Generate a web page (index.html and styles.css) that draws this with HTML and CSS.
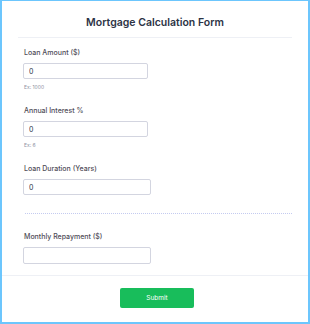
FILE: index.html
```html
<!DOCTYPE html>
<html>
<head>
  <title>Mortgage Calculation Form</title>
  <link rel="stylesheet" href="styles.css">
</head>
<body>
  <div class="frame">
    <div class="header">
      <h1 class="header-title">Mortgage Calculation Form</h1>
    </div>

    <form class="form-body">
      <div class="form-group">
        <label class="form-label" for="loanAmount">Loan Amount ($)</label>
        <input type="text" id="loanAmount" class="form-input" value="0">
        <div class="form-sublabel">Ex: 1000</div>
      </div>
      <div class="form-group">
        <label class="form-label" for="interest">Annual Interest %</label>
        <input type="text" id="interest" class="form-input" value="0">
        <div class="form-sublabel">Ex: 6</div>
      </div>
      <div class="form-group">
        <label class="form-label" for="duration">Loan Duration (Years)</label>
        <input type="text" id="duration" class="form-input wide" value="0">
      </div>

      <div class="divider"></div>

      <div class="form-group result">
        <label class="form-label" for="repayment">Monthly Repayment ($)</label>
        <input type="text" id="repayment" class="form-input wide tall">
      </div>
    </form>

    <div class="footer">
      <button type="button" class="btn-submit">Submit</button>
    </div>
  </div>
</body>
</html>
```

FILE: styles.css
```css
:root {
  --frame: #6cc6fd;
  --text: #2c3345;
  --label: #4f4d57;
  --text-light: #8d8fa0;
  --border: #d3d5e0;
  --line: #eef0f5;
  --green: #18bd5b;
}

html, body {
  margin: 0;
  padding: 0;
  background: #fff;
}

body {
  font-family: Inter, 'Noto Sans', sans-serif;
  color: var(--text);
}

.frame {
  box-sizing: border-box;
  width: 310px;
  height: 324px;
  border: 2px solid var(--frame);
  border-top-width: 1px;
  display: flex;
  flex-direction: column;
}

.header {
  margin: 0 16px;
  padding: 15px 0 7px;
  border-bottom: 1px solid var(--line);
  text-align: center;
}

.header-title {
  margin: 0;
  font-size: 10.5px;
  line-height: 14px;
  font-weight: 600;
}

.form-body {
  padding: 0 21px;
}

.form-group {
  display: flex;
  flex-direction: column;
  align-items: flex-start;
  margin-top: 10px;
}

.form-group + .form-group {
  margin-top: 15px;
}

.form-label {
  display: block;
  font-size: 7px;
  line-height: 10px;
  font-weight: 500;
  color: var(--label);
  padding-left: 1px;
  margin-bottom: 5px;
}

.form-input {
  box-sizing: border-box;
  width: 125px;
  height: 16px;
  margin: 0;
  padding: 0 5px;
  border: 1px solid var(--border);
  border-radius: 2px;
  font-family: inherit;
  font-size: 7px;
  color: var(--text);
  background: #fff;
  outline: none;
}

.form-input.wide {
  width: 128px;
}

.form-input.tall {
  height: 17px;
}

.form-sublabel {
  margin-top: 4px;
  padding-left: 1px;
  font-size: 5px;
  line-height: 8px;
  color: var(--text-light);
}

.divider {
  margin: 18px 0 0 2px;
  width: 267px;
  border-top: 1px dotted #c4cbf0;
}

.form-group.result {
  margin-top: 18px;
}

.footer {
  margin-top: 11px;
  border-top: 1px solid var(--line);
  padding-top: 12px;
  display: flex;
  justify-content: center;
}

.btn-submit {
  width: 74px;
  height: 20px;
  margin-left: 4px;
  border: none;
  border-radius: 2px;
  background: var(--green);
  color: #fff;
  font-family: inherit;
  font-size: 6.5px;
  font-weight: 400;
  cursor: pointer;
}
```
